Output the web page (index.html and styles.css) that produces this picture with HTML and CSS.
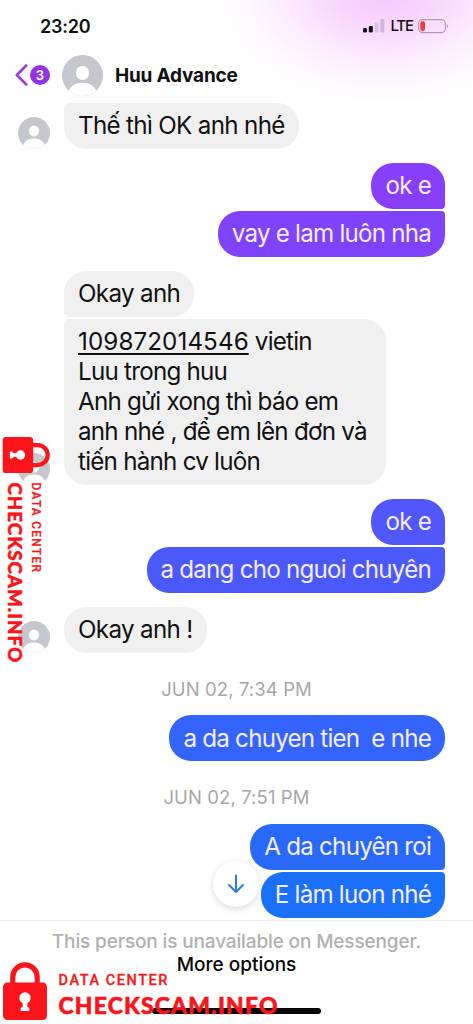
FILE: index.html
```html
<!DOCTYPE html>
<html lang="vi">
<head>
<meta charset="utf-8">
<title>Huu Advance</title>
<link rel="stylesheet" href="styles.css">
</head>
<body>
<svg class="defs" width="0" height="0">
  <symbol id="avatar" viewBox="0 0 40 40">
    <clipPath id="round"><circle cx="20" cy="20" r="20"/></clipPath>
    <g clip-path="url(#round)"><rect width="40" height="40" fill="#c5c7cd"/><ellipse cx="20" cy="17.5" rx="6.4" ry="7" fill="#fff"/><path d="M5 41C6 31 12 27 20 27s14 4 15 14z" fill="#fff"/></g>
  </symbol>
  <symbol id="lock" viewBox="0 0 44 58">
    <path d="M9.800 24V15a12.200 12.200 0 0 1 24.400 0v9" fill="none" stroke="#fb1419" stroke-width="5.200"/>
    <rect x="0" y="20.500" width="44" height="37.500" rx="4.500" fill="#fb1419"/>
    <circle cx="22" cy="36" r="5.700" fill="#fff"/><path d="M19.500 39h5l-.3 5.500 2.100 1.500v3h-8.600v-3l2.100-1.500z" fill="#fff"/>
  </symbol>
</svg>
<div class="phone">
  <header class="header">
    <div class="status">
      <span class="clock">23:20</span>
      <span class="status-right">
        <svg width="22" height="14" viewBox="0 0 22 14"><rect x="0" y="9" width="4" height="4.500" rx="1.200" fill="#161119"/><rect x="5.800" y="7" width="4" height="6.500" rx="1.200" fill="#161119"/><rect x="11.600" y="3.500" width="4" height="10" rx="1.200" fill="#d9bfe2"/><rect x="17.400" y="0" width="4" height="13.500" rx="1.200" fill="#d0b5da"/></svg>
        <span class="lte">LTE</span>
        <svg width="31" height="15" viewBox="0 0 31 15"><rect x=".6" y=".6" width="26.800" height="13" rx="4" fill="none" stroke="#ae9bb3" stroke-width="1.100"/><rect x="2.300" y="2.300" width="4.700" height="9.600" rx="2" fill="#f13c43"/><path d="M29 5q1.800 2 0 4.300z" fill="#8f8194"/></svg>
      </span>
    </div>
    <div class="title-row">
      <svg class="back" width="13" height="22" viewBox="0 0 13 22"><path d="M11.300 1.500 1.800 11l9.500 9.500" fill="none" stroke="#963bdc" stroke-width="2.500" stroke-linecap="round" stroke-linejoin="round"/></svg>
      <span class="count">3</span>
      <svg class="avatar-lg"><use href="#avatar"/></svg>
      <h1 class="name">Huu Advance</h1>
    </div>
  </header>
  <main class="chat">
    <div class="row in"><svg class="avatar"><use href="#avatar"/></svg><div class="stack"><p class="bubble first">Thế thì OK anh nhé</p></div></div>
    <div class="row out"><div class="stack"><p class="bubble top c1">ok e</p><p class="bubble bottom c2">vay e lam luôn nha</p></div></div>
    <div class="row in"><svg class="avatar"><use href="#avatar"/></svg><div class="stack"><p class="bubble top">Okay anh</p><p class="bubble bottom long"><span class="number">109872014546</span> vietin<br>Luu trong huu<br>Anh gửi xong thì báo em<br>anh nhé , để em lên đơn và<br>tiến hành cv luôn</p></div></div>
    <div class="row out"><div class="stack"><p class="bubble top c3">ok e</p><p class="bubble bottom c4">a dang cho nguoi chuyên</p></div></div>
    <div class="row in"><svg class="avatar"><use href="#avatar"/></svg><div class="stack"><p class="bubble">Okay anh !</p></div></div>
    <p class="date">JUN 02, 7:34 PM</p>
    <div class="row out"><div class="stack"><p class="bubble c5">a da chuyen tien  e nhe</p></div></div>
    <p class="date">JUN 02, 7:51 PM</p>
    <div class="row out"><div class="stack"><p class="bubble top c6">A da chuyên roi</p><p class="bubble bottom c7">E làm luon nhé</p></div></div>
    <div class="jump"><svg width="18" height="20" viewBox="0 0 18 20"><path d="M9 1.500v16M2 11l7 7 7-7" fill="none" stroke="#287fd8" stroke-width="2" stroke-linecap="round" stroke-linejoin="round"/></svg></div>
  </main>
  <footer class="footer">
    <p class="notice">This person is unavailable on Messenger.</p>
    <p class="more">More options</p>
    <div class="home"></div>
  </footer>
  <svg class="brand brand-side" viewBox="0 0 276 58">
    <use href="#lock" width="44" height="58"/>
    <text class="brand-top" x="55.500" y="22.500" textLength="109">DATA CENTER</text>
    <text class="brand-name" x="55.500" y="51.500" textLength="219">CHECKSCAM.INFO</text>
  </svg>
  <svg class="brand brand-bottom" viewBox="0 0 276 58">
    <use href="#lock" width="44" height="58"/>
    <text class="brand-top" x="55.500" y="22.500" textLength="109">DATA CENTER</text>
    <text class="brand-name" x="55.500" y="51.500" textLength="219">CHECKSCAM.INFO</text>
  </svg>
</div>
</body>
</html>
```
FILE: styles.css
```css
* { box-sizing: border-box; }
body { margin: 0; background: #fff; font-family: Inter, "Liberation Sans", sans-serif; color: #111; }
p, h1 { margin: 0; }
svg { display: block; flex: none; }
.defs { position: absolute; }
.phone { position: relative; width: 473px; height: 1024px; overflow: hidden; display: flex; flex-direction: column; }
.header {
  height: 103px; flex: none;
  background: radial-gradient(ellipse 165px 110px at 385px -8px, #f6c8fc 0, #f8d6fd 30%, #fcecff 62%, #fefaff 88%, rgba(255,255,255,0) 100%), #fefefe;
}
.status { height: 52px; display: flex; justify-content: space-between; padding: 0 24px 0 40px; align-items: center; }
.clock { font-size: 18px; font-weight: 600; letter-spacing: -.2px; }
.status-right { display: flex; align-items: center; }
.lte { font-size: 15px; font-weight: 500; letter-spacing: -1.100px; margin: 0 5px 0 5px; line-height: 16px; }
.title-row { display: flex; align-items: center; height: 46px; padding-left: 15px; }
.count { width: 20px; height: 20px; margin-left: 2px; border-radius: 50%; background: #9333e8; color: #fff; font-size: 13px; font-weight: 600; line-height: 20px; text-align: center; }
.avatar-lg { width: 41px; height: 41px; margin-left: 12px; }
.name { margin: 2px 0 0 12px; font-size: 19px; font-weight: 700; letter-spacing: -.2px; line-height: 24px; }
.chat { position: relative; height: 817px; flex: none; display: flex; flex-direction: column; gap: 14px; padding: 0 28px 0 18px; }
.row { display: flex; align-items: flex-end; gap: 14px; }
.out { justify-content: flex-end; }
.avatar { width: 32px; height: 32px; }
.stack { display: flex; flex-direction: column; gap: 2.400px; align-items: flex-start; }
.out .stack { align-items: flex-end; }
.bubble { padding: 8.300px 14px 7.500px; font-size: 24.200px; line-height: 30px; letter-spacing: -.79px; white-space: pre; border-radius: 22px; background: #f0f0f1; }
.in .bubble { letter-spacing: -.68px; }
.in .first { padding-top: 7.800px; padding-bottom: 8px; border-top-left-radius: 5px; }
.in .top { border-bottom-left-radius: 5px; }
.in .bottom { border-top-left-radius: 5px; }
.in .long { padding-right: 19px; letter-spacing: -.76px; }
.out .bubble { color: #f5edff; }
.out .top { border-bottom-right-radius: 4px; }
.out .bottom { border-top-right-radius: 4px; }
.number { letter-spacing: .1px; text-decoration: underline; text-decoration-thickness: 1.500px; text-underline-offset: 3px; }
.out .c1 { background: #873ffa; }
.out .c2 { background: #7e43fa; }
.out .c3 { background: #5157fb; }
.out .c4 { background: #4b59fb; }
.out .c5 { background: #3564fc; }
.out .c6 { background: #2869fa; }
.out .c7 { background: #1b70fb; }
.date { height: 34.800px; line-height: 44px; padding-left: 10px; text-align: center; font-size: 18.500px; letter-spacing: .1px; color: #a7a7aa; }
.jump { position: absolute; left: 213px; top: 758px; width: 46px; height: 46px; border-radius: 50%; background: #fff; box-shadow: 0 2px 6px rgba(0,0,0,.16); display: flex; align-items: center; justify-content: center; }
.footer { position: relative; flex: 1; border-top: 1px solid #ededef; padding-top: 9px; text-align: center; }
.notice { font-size: 19px; font-weight: 500; letter-spacing: -.14px; line-height: 23px; color: #b0b0b3; }
.more { font-size: 19px; font-weight: 500; line-height: 23px; color: #080808; }
.home { margin: 32px auto 0; width: 169px; height: 6px; border-radius: 3px; background: #050505; }
.brand { position: absolute; width: 276px; height: 58px; overflow: visible; }
.brand-bottom { left: 3px; top: 962px; }
.brand-side { left: 50px; top: 437px; transform-origin: 0 0; transform: rotate(90deg) scale(.82); }
.brand-top { font: 500 14.500px Roboto, sans-serif; fill: #f21c20; stroke: #f21c20; stroke-width: .3px; }
.brand-name { font: 900 22.800px Lato, sans-serif; fill: #fb1419; stroke: #fb1419; stroke-width: .6px; }
```
